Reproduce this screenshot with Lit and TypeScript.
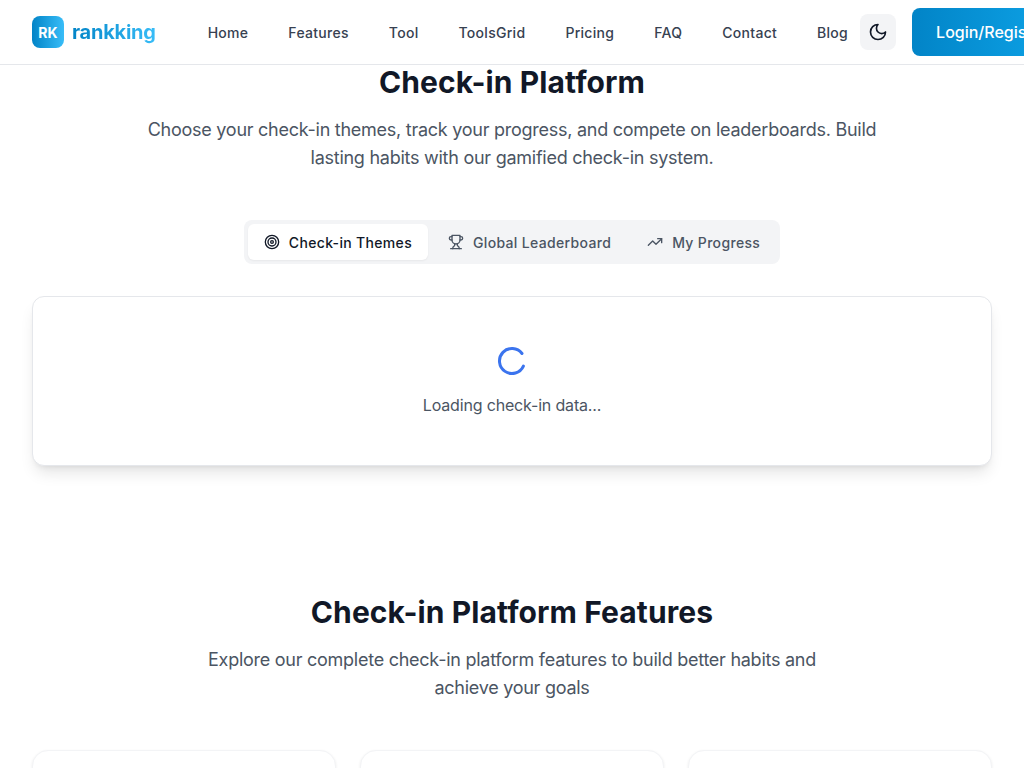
import { LitElement, html, css } from 'lit';
import { customElement } from 'lit/decorators.js';

const NAV = ['Home', 'Features', 'Tool', 'ToolsGrid', 'Pricing', 'FAQ', 'Contact', 'Blog'];

@customElement('app-root')
export class AppRoot extends LitElement {
  static styles = css`
    :host {
      display: block;
      height: 768px;
      overflow: hidden;
      background: #fff;
      font-family: Inter, 'Liberation Sans', sans-serif;
      color: #111827;
    }
    .header {
      display: flex;
      align-items: center;
      height: 64px;
      padding-left: 32px;
      background: #fff;
      border-bottom: 1px solid #e5e7eb;
      white-space: nowrap;
    }
    .logo {
      display: flex;
      align-items: center;
      gap: 8px;
      flex: none;
    }
    .logo-mark {
      width: 32px;
      height: 32px;
      border-radius: 8px;
      display: flex;
      align-items: center;
      justify-content: center;
      background: linear-gradient(to right, #0284c7, #38bdf8);
      color: #fff;
      font-size: 14px;
      font-weight: 700;
    }
    .logo-text {
      font-size: 20px;
      font-weight: 700;
      line-height: 28px;
      letter-spacing: -0.25px;
      background: linear-gradient(to right, #0284c7, #38bdf8);
      -webkit-background-clip: text;
      background-clip: text;
      color: transparent;
    }
    .nav {
      display: flex;
      gap: 40px;
      margin-left: 52px;
      flex: none;
    }
    .nav a {
      font-size: 14px;
      font-weight: 500;
      letter-spacing: 0.29px;
      color: #374151;
    }
    .theme {
      flex: none;
      width: 36px;
      height: 36px;
      margin-left: 12px;
      border-radius: 8px;
      background: #f3f4f6;
      display: flex;
      align-items: center;
      justify-content: center;
      color: #111827;
    }
    .login {
      flex: none;
      height: 48px;
      margin-left: 16px;
      padding: 0 24px;
      border-radius: 8px;
      display: flex;
      align-items: center;
      background: linear-gradient(to right, #0284c7, #0ea5e9);
      color: #fff;
      font-size: 16px;
      font-weight: 500;
    }
    .main {
      padding: 0 32px;
    }
    .title {
      margin: 0;
      text-align: center;
      font-size: 30px;
      line-height: 34px;
      font-weight: 700;
      letter-spacing: 0.1px;
      color: #111827;
    }
    .lead {
      margin: 17px auto 0;
      text-align: center;
      font-size: 18px;
      line-height: 28px;
      letter-spacing: -0.26px;
      color: #4b5563;
    }
    .lead.top {
      width: 768px;
    }
    .lead.bottom {
      width: 672px;
    }
    .tabs-row {
      display: flex;
      justify-content: center;
      margin-top: 48px;
    }
    .tabs {
      display: flex;
      padding: 4px;
      gap: 4px;
      border-radius: 8px;
      background: #f3f4f6;
    }
    .tab {
      display: flex;
      align-items: center;
      gap: 9px;
      height: 36px;
      padding: 0 16px;
      border-radius: 6px;
      font-size: 14px;
      font-weight: 500;
      letter-spacing: 0.33px;
      color: #4b5563;
    }
    .tab.active {
      background: #fff;
      color: #111827;
      box-shadow: 0 1px 2px rgba(0, 0, 0, 0.05);
    }
    .loading {
      box-sizing: border-box;
      height: 170px;
      margin-top: 32px;
      border: 1px solid #e5e7eb;
      border-radius: 12px;
      background: #fff;
      box-shadow: 0 10px 15px -3px rgba(0, 0, 0, 0.1), 0 4px 6px -4px rgba(0, 0, 0, 0.1);
      display: flex;
      flex-direction: column;
      align-items: center;
      padding-top: 48px;
    }
    .spinner {
      display: block;
    }
    .loading p {
      margin: 16px 0 0;
      font-size: 16px;
      line-height: 24px;
      letter-spacing: -0.17px;
      color: #4b5563;
    }
    .features {
      margin-top: 129px;
    }
    .cards {
      display: grid;
      grid-template-columns: repeat(3, 1fr);
      gap: 24px;
      margin-top: 48px;
    }
    .card {
      height: 200px;
      border: 1px solid #f3f4f6;
      border-radius: 16px;
      background: #fff;
      box-shadow: 0 1px 3px rgba(0, 0, 0, 0.08);
    }
  `;

  render() {
    return html`
      <header class="header">
        <div class="logo">
          <div class="logo-mark">RK</div>
          <span class="logo-text">rankking</span>
        </div>
        <nav class="nav">${NAV.map((n) => html`<a>${n}</a>`)}</nav>
        <div class="theme">
          <svg width="20" height="20" viewBox="0 0 24 24" fill="none" stroke="currentColor" stroke-width="2" stroke-linecap="round" stroke-linejoin="round">
            <path d="M12 3a6 6 0 0 0 9 9 9 9 0 1 1-9-9Z" />
          </svg>
        </div>
        <div class="login">Login/Register</div>
      </header>
      <main class="main">
        <h1 class="title">Check-in Platform</h1>
        <p class="lead top">
          Choose your check-in themes, track your progress, and compete on leaderboards. Build lasting habits with our gamified check-in system.
        </p>
        <div class="tabs-row">
          <div class="tabs">
            <div class="tab active">
              <svg width="16" height="16" viewBox="0 0 24 24" fill="none" stroke="currentColor" stroke-width="2" stroke-linecap="round" stroke-linejoin="round">
                <circle cx="12" cy="12" r="10" /><circle cx="12" cy="12" r="6" /><circle cx="12" cy="12" r="2" />
              </svg>
              Check-in Themes
            </div>
            <div class="tab">
              <svg width="16" height="16" viewBox="0 0 24 24" fill="none" stroke="currentColor" stroke-width="2" stroke-linecap="round" stroke-linejoin="round">
                <path d="M6 9H4.5a2.5 2.5 0 0 1 0-5H6" /><path d="M18 9h1.5a2.5 2.5 0 0 0 0-5H18" /><path d="M4 22h16" />
                <path d="M10 14.66V17c0 .55-.47.98-.97 1.21C7.85 18.75 7 20.24 7 22" />
                <path d="M14 14.66V17c0 .55.47.98.97 1.21C16.15 18.75 17 20.24 17 22" />
                <path d="M18 2H6v7a6 6 0 0 0 12 0V2Z" />
              </svg>
              Global Leaderboard
            </div>
            <div class="tab">
              <svg width="16" height="16" viewBox="0 0 24 24" fill="none" stroke="currentColor" stroke-width="2" stroke-linecap="round" stroke-linejoin="round">
                <polyline points="22 7 13.5 15.5 8.5 10.5 2 17" /><polyline points="16 7 22 7 22 13" />
              </svg>
              My Progress
            </div>
          </div>
        </div>
        <section class="loading">
          <svg class="spinner" width="32" height="32" viewBox="0 0 32 32" fill="none" stroke="#3b74ee" stroke-width="3" stroke-linecap="round">
            <path d="M26 8.5A12.5 12.5 0 1 0 27.4 21.1" />
          </svg>
          <p>Loading check-in data...</p>
        </section>
        <section class="features">
          <h2 class="title">Check-in Platform Features</h2>
          <p class="lead bottom">
            Explore our complete check-in platform features to build better habits and achieve your goals
          </p>
          <div class="cards">
            <div class="card"></div>
            <div class="card"></div>
            <div class="card"></div>
          </div>
        </section>
      </main>
    `;
  }
}
